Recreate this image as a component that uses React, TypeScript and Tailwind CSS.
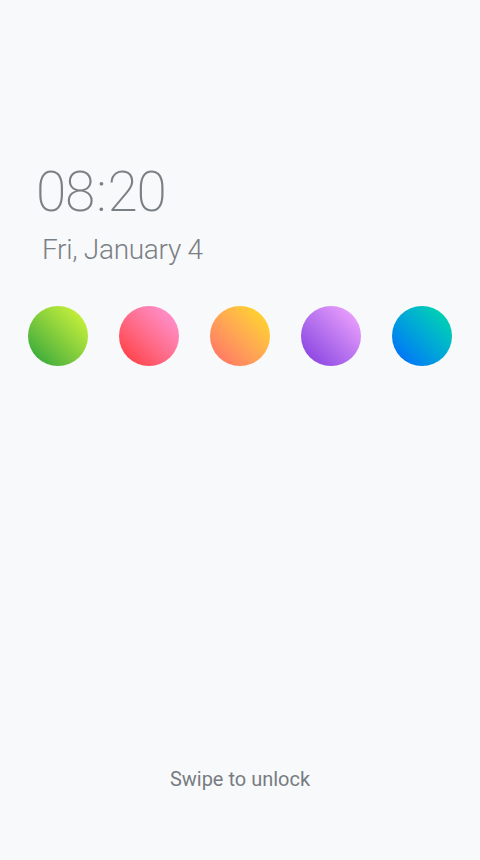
import React from 'react';

const dots = [
  'from-[#04a23a] to-[#d8fa38]',
  'from-[#ff2a2a] to-[#ff98e0]',
  'from-[#ff6868] to-[#ffe000]',
  'from-[#8034dc] to-[#faaaff]',
  'from-[#005eff] to-[#00dea0]',
];

export default function App() {
  return (
    <div className="w-full h-[860px] bg-[#f8f9fb] flex flex-col font-['Roboto',sans-serif] overflow-hidden">
      {/* Clock */}
      <div className="pt-[160px] pl-[36px] text-[#7b8085]">
        <div className="text-[55px] font-extralight leading-[64px] tracking-[-1.2px]">
          08<span className="px-[2px]">:</span>20
        </div>
        <div className="mt-[8px] pl-[6px] text-[28px] font-light leading-[36px] tracking-[-0.3px]">Fri, January 4</div>
      </div>

      {/* Theme dots */}
      <div className="mt-[38px] flex justify-between px-[28px]">
        {dots.map((d, i) => (
          <div key={i} className={`w-[60px] h-[60px] rounded-full bg-linear-to-tr ${d}`} />
        ))}
      </div>

      <div className="flex-1" />

      <div className="pb-[66px] text-center text-[20px] text-[#777c81]">Swipe to unlock</div>
    </div>
  );
}
